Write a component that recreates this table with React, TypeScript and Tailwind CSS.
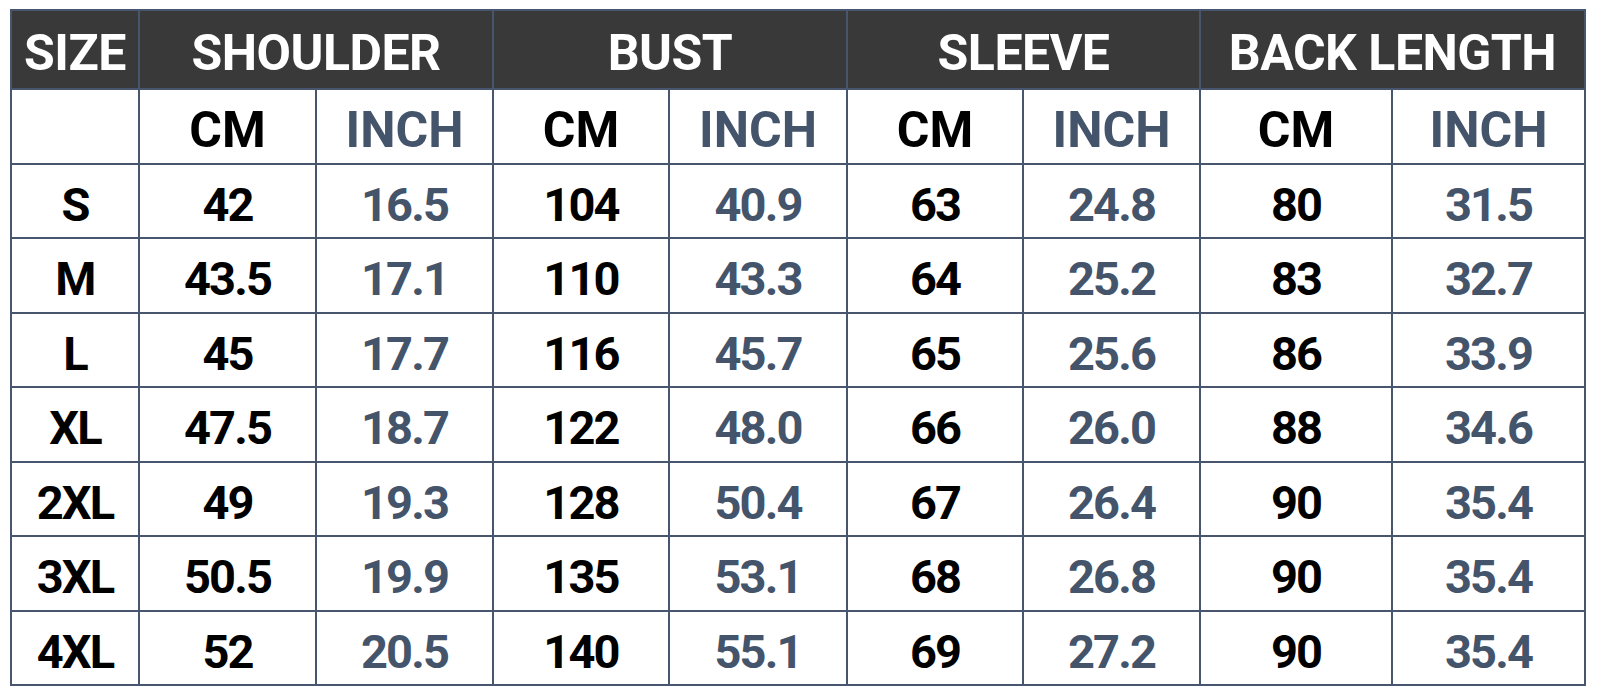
const groups = ["SHOULDER", "BUST", "SLEEVE", "BACK LENGTH"];

const rows: [string, string, string, string, string, string, string, string, string][] = [
  ["S", "42", "16.5", "104", "40.9", "63", "24.8", "80", "31.5"],
  ["M", "43.5", "17.1", "110", "43.3", "64", "25.2", "83", "32.7"],
  ["L", "45", "17.7", "116", "45.7", "65", "25.6", "86", "33.9"],
  ["XL", "47.5", "18.7", "122", "48.0", "66", "26.0", "88", "34.6"],
  ["2XL", "49", "19.3", "128", "50.4", "67", "26.4", "90", "35.4"],
  ["3XL", "50.5", "19.9", "135", "53.1", "68", "26.8", "90", "35.4"],
  ["4XL", "52", "20.5", "140", "55.1", "69", "27.2", "90", "35.4"],
];

const cell = "flex items-center justify-center bg-white pt-[8px]";
const head = "flex items-center justify-center bg-[#393939] pt-[8px] text-[50px] tracking-[-0.01em] text-white";

export default function App() {
  return (
    <div className="h-[698px] w-[1598px] bg-white pl-[10px] pt-[9px] font-['Roboto','Liberation_Sans',sans-serif] font-bold">
      <div className="grid w-fit grid-cols-[126px_175px_175px_174px_176px_174px_175px_190px_191px] grid-rows-[77px_repeat(8,72.5px)] gap-[2px] bg-[#48556f] p-[2px]">
        <div className={head}>SIZE</div>
        {groups.map((g) => (
          <div key={g} className={`col-span-2 ${head}`}>
            {g}
          </div>
        ))}

        <div className="bg-white" />
        {groups.map((g) => (
          <div key={g} className="contents">
            <div className={`${cell} text-[50px] text-black`}>CM</div>
            <div className={`${cell} text-[50px] text-[#44546a]`}>INCH</div>
          </div>
        ))}

        {rows.map((r) => (
          <div key={r[0]} className="contents">
            {r.map((v, i) => (
              <div
                key={i}
                className={`${cell} text-[47px] tracking-[-0.04em] ${
                  i > 0 && i % 2 === 0 ? "text-[#44546a]" : "text-black"
                }`}
              >
                {v}
              </div>
            ))}
          </div>
        ))}
      </div>
    </div>
  );
}
